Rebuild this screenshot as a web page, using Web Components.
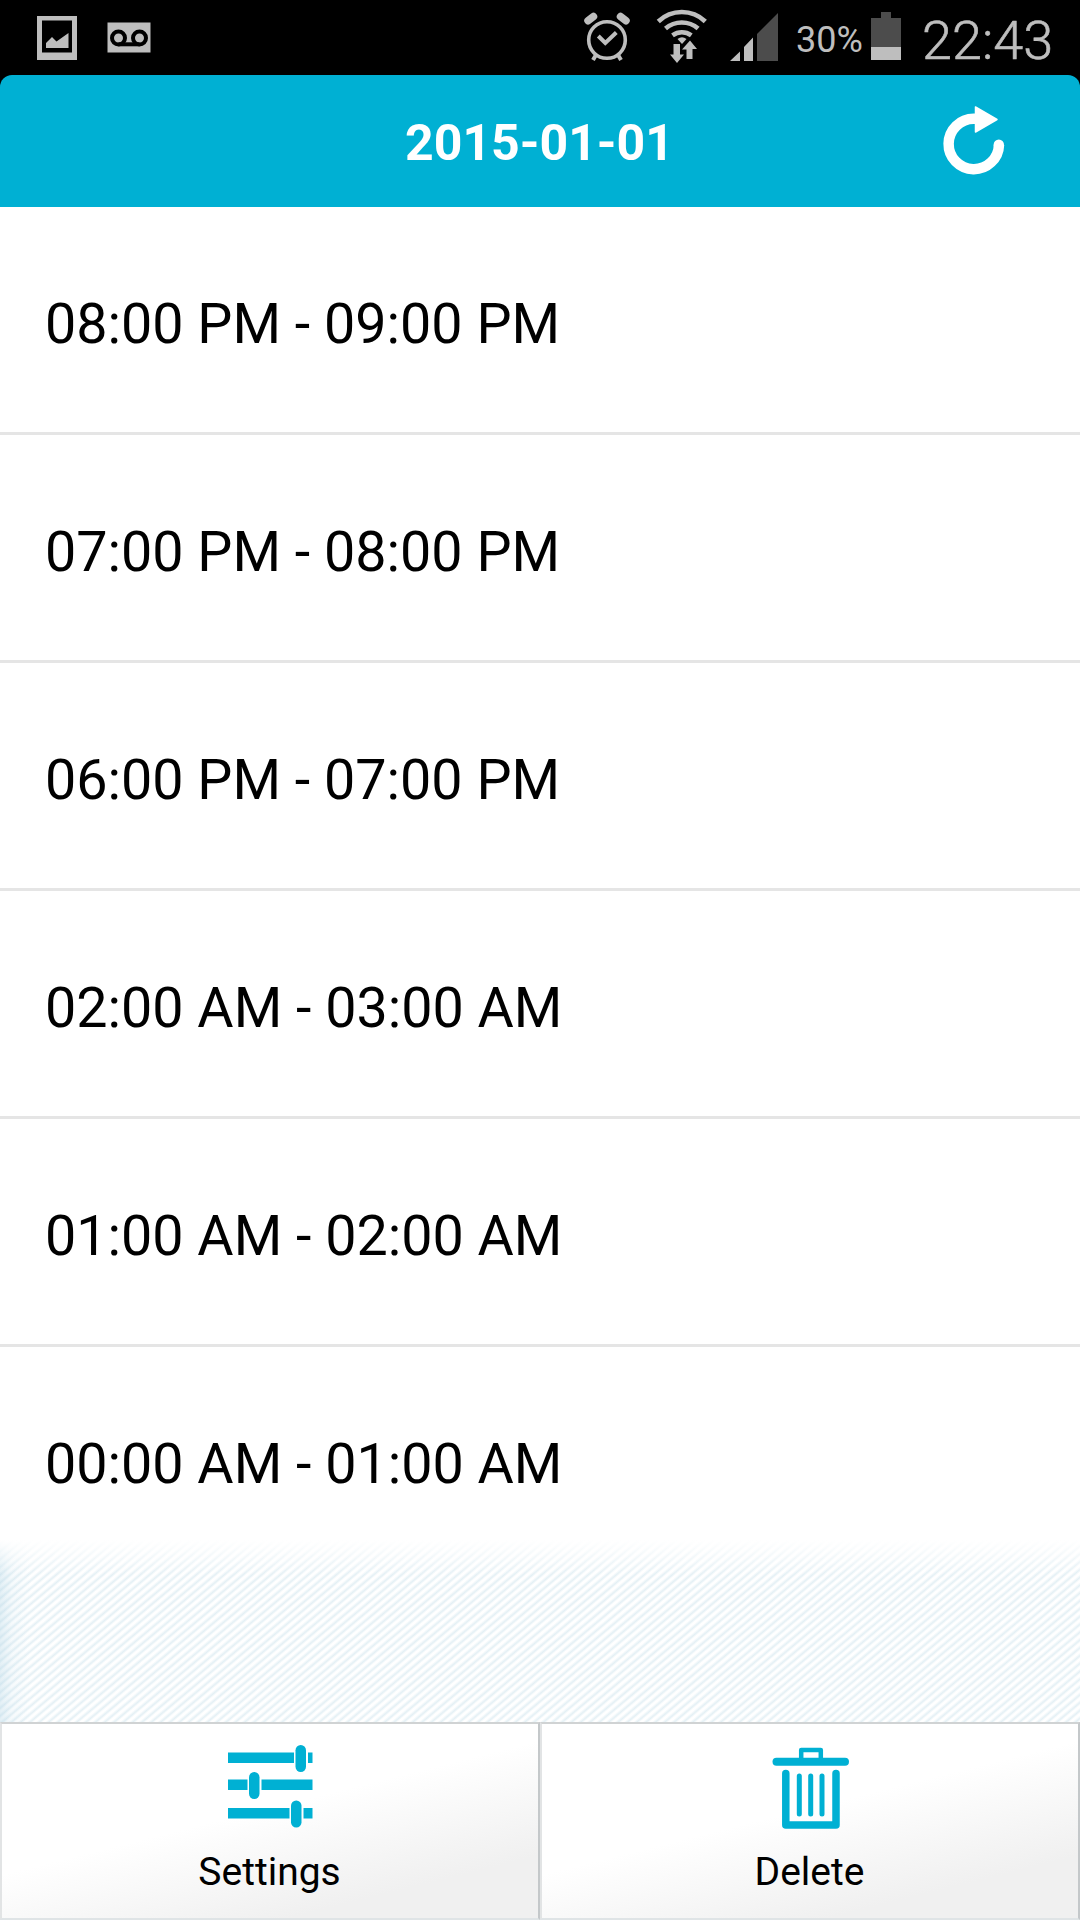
<!DOCTYPE html>
<html lang="en">
<head>
<meta charset="utf-8">
<title>2015-01-01</title>
<style>
  body {
    margin: 0;
    background: #000;
    font-family: Roboto, "Liberation Sans", sans-serif;
  }
</style>
</head>
<body>
<hour-app></hour-app>

<script>
const HOURS = [
  "08:00 PM - 09:00 PM",
  "07:00 PM - 08:00 PM",
  "06:00 PM - 07:00 PM",
  "02:00 AM - 03:00 AM",
  "01:00 AM - 02:00 AM",
  "00:00 AM - 01:00 AM"
];

class StatusBar extends HTMLElement {
  constructor() {
    super();
    this.attachShadow({ mode: "open" });
  }

  static get styles() {
    return /* css */`
      :host {
        display: flex;
        justify-content: space-between;
        height: 75px;
        background: #000;
        color: #bebebe;
      }

      .group { display: flex; }

      svg { display: block; }

      span {
        white-space: nowrap;
        line-height: 75px;
      }

      .percent {
        width: 72px;
        font-size: 36px;
        padding-top: 3px;
        box-sizing: border-box;
      }

      .clock {
        width: 158px;
        font-size: 54px;
        font-weight: 300;
        -webkit-text-stroke: 0.6px #bebebe;
        padding-top: 3px;
        box-sizing: border-box;
      }
    `;
  }

  connectedCallback() {
    this.shadowRoot.innerHTML = /* html */`
    <style>${StatusBar.styles}</style>
    <div class="group">
      <svg width="200" height="75" fill="#bebebe">
        <path fill-rule="evenodd" d="M37 16h40v44H37zM42 20.500v32h30v-32z"/>
        <path d="M46 48v-5l6-6 4.500 4.500L68.500 33v15z"/>
        <path d="M107.500 22.500h43v30h-43z"/>
        <g fill="none" stroke="#000" stroke-width="4">
          <circle cx="118.500" cy="38" r="6.500"/>
          <circle cx="139.500" cy="38" r="6.500"/>
          <path d="M118.500 44.300h21"/>
        </g>
      </svg>
    </div>
    <div class="group">
      <svg width="236" height="75" viewBox="560 0 236 75" fill="#bebebe">
        <g fill="none" stroke="#bebebe">
          <circle cx="607" cy="40" r="18.300" stroke-width="3.600"/>
          <path d="M598.300 36l7 7 11-10.500" stroke-width="4"/>
          <path d="M588 20.800l5.500-4.300M626 20.800l-5.500-4.300" stroke-width="7.500" stroke-linecap="round"/>
          <path d="M596.500 54l-3.500 6M617.500 54l3.500 6" stroke-width="4"/>
          <path d="M658.300 21.500a34 34 0 0 1 47 0M665.500 28.500a25 25 0 0 1 32.600 0M672.500 35.300a16 16 0 0 1 18.800 0" stroke-width="4.600"/>
        </g>
        <path d="M677.500 39q4.500-3.500 9 0l-4.500 5z"/>
        <path d="M673.500 44h6.500v10.500h4L677 63l-7-8.500h3.500z"/>
        <path d="M686.500 59V49.500h-4.500l8-9 7 8.500h-4.500v10z"/>
        <path d="M730 61l10-9.500V61zM744 61V47l9-9.500V61z"/>
        <path fill="#4c4c4c" d="M757 61V34l21-21v48z"/>
      </svg>
      <span class="percent">30%</span>
      <svg width="54" height="75" viewBox="868 0 54 75">
        <path fill="#4c4c4c" d="M871 18h10v-6h10v6h10v29h-30z"/>
        <path fill="#bebebe" d="M871 47h30v13h-30z"/>
      </svg>
      <span class="clock">22:43</span>
    </div>`;
  }
}

class TitleBar extends HTMLElement {
  constructor() {
    super();
    this.attachShadow({ mode: "open" });
  }

  static get styles() {
    return /* css */`
      :host {
        display: grid;
        grid-template-columns: 1fr auto 1fr;
        align-items: center;
        height: 132px;
        border-radius: 12px 12px 0 0;
        background: #00b0d3;
        color: #fff;
      }

      h1 {
        grid-column: 2;
        margin: 0 1px 0 0;
        font-size: 50px;
        line-height: 128px;
        padding-top: 4px;
        font-weight: 700;
      }

      svg {
        justify-self: end;
        margin: 1px 70px 0 0;
      }
    `;
  }

  connectedCallback() {
    this.shadowRoot.innerHTML = /* html */`
    <style>${TitleBar.styles}</style>
    <h1><slot></slot></h1>
    <svg width="70" height="74" viewBox="940 104 70 74" fill="none" stroke="#fff">
      <path d="M976 117.800h-2a25.200 25.200 0 1 0 25 26" stroke-width="10.500"/>
      <circle cx="998.800" cy="143.800" r="5.200" fill="#fff" stroke="none"/>
      <path d="M975.500 106v25l21.500-12.500z" fill="#fff" stroke-width="1.500" stroke-linejoin="round"/>
    </svg>`;
  }
}

class HourRow extends HTMLElement {
  constructor() {
    super();
    this.attachShadow({ mode: "open" });
  }

  static get styles() {
    return /* css */`
      :host {
        display: block;
        height: 225px;
        padding-left: 45px;
        border-bottom: 3px solid #e5e5e5;
        background: #fff;
        color: #000;
        font-size: 55.65px;
        line-height: 234px;
        white-space: nowrap;
      }

      /* the list fades out at its lower edge */
      :host(:last-of-type) {
        border-bottom-color: transparent;
        background: linear-gradient(#fff 193px, transparent 228px) border-box;
      }
    `;
  }

  connectedCallback() {
    this.shadowRoot.innerHTML = /* html */`
    <style>${HourRow.styles}</style>
    <slot></slot>`;
  }
}

class ToolButton extends HTMLElement {
  constructor() {
    super();
    this.attachShadow({ mode: "open" });
  }

  static get styles() {
    return /* css */`
      :host {
        flex: 1;
        display: flex;
        flex-direction: column;
        align-items: center;
        box-sizing: border-box;
        height: 198px;
        border: 2px solid;
        border-color: #d0d3d4 #c4c8ca #dfe4e6 #e2e4e5;
        background: linear-gradient(166deg, #fff 46%, #f0f0f0 81%);
        color: #000;
        font-size: 39px;
      }

      .icon {
        height: 108px;
      }

      .label {
        margin-right: 1px;
        line-height: 81px;
      }
    `;
  }

  connectedCallback() {
    this.shadowRoot.innerHTML = /* html */`
    <style>${ToolButton.styles}</style>
    <div class="icon"><slot name="icon"></slot></div>
    <div class="label"><slot></slot></div>`;
  }
}

class HourApp extends HTMLElement {
  constructor() {
    super();
    this.attachShadow({ mode: "open" });
  }

  static get styles() {
    return /* css */`
      :host {
        display: flex;
        flex-direction: column;
        width: 1080px;
        height: 1920px;
        overflow: hidden;
      }

      main {
        flex: 1;
        background:
          linear-gradient(90deg, rgba(180, 214, 230, .38), rgba(180, 214, 230, .12) 12px, transparent 30px),
          repeating-linear-gradient(140deg, #fff 0 1.500px, #e4f0f5 4px, #fff 6px);
      }

      footer {
        display: flex;
        background: #eef4f7;
      }

      svg { display: block; }
    `;
  }

  connectedCallback() {
    this.shadowRoot.innerHTML = /* html */`
    <style>${HourApp.styles}</style>
    <status-bar></status-bar>
    <title-bar>2015-01-01</title-bar>
    <main>
      ${HOURS.map(hour => `<hour-row>${hour}</hour-row>`).join("")}
    </main>
    <footer>
      <tool-button>
        <svg slot="icon" width="90" height="108" viewBox="225 1724 90 108" fill="#00b0d3">
          <path d="M228 1752.500h66v10.500h-66zM308 1752.500h4.500v10.500H308z"/>
          <path d="M228 1779.500h19.500v10.500H228zM261.500 1779.500h51v10.500h-51z"/>
          <path d="M228 1808h61.500v10.500H228zM303.500 1808h9v10.500h-9z"/>
          <rect x="295.500" y="1745" width="10.500" height="27" rx="5.200"/>
          <rect x="249" y="1772" width="10.500" height="27" rx="5.200"/>
          <rect x="291" y="1800.500" width="10.500" height="27" rx="5.200"/>
        </svg>
        Settings
      </tool-button>
      <tool-button>
        <svg slot="icon" width="90" height="108" viewBox="765 1724 90 108" fill="none" stroke="#00b0d3" stroke-linecap="round" stroke-linejoin="round">
          <path d="M776.500 1761.700H845" stroke-width="8"/>
          <path d="M801.200 1760v-10h19.600v10" stroke-width="4.500"/>
          <path d="M785.800 1773.500v51.500h50.200v-51.500" stroke-width="7.500"/>
          <path d="M799.300 1776v38M810.700 1776v38M822 1776v38" stroke-width="5"/>
        </svg>
        Delete
      </tool-button>
    </footer>`;
  }
}

customElements.define("status-bar", StatusBar);
customElements.define("title-bar", TitleBar);
customElements.define("hour-row", HourRow);
customElements.define("tool-button", ToolButton);
customElements.define("hour-app", HourApp);
</script>
</body>
</html>
